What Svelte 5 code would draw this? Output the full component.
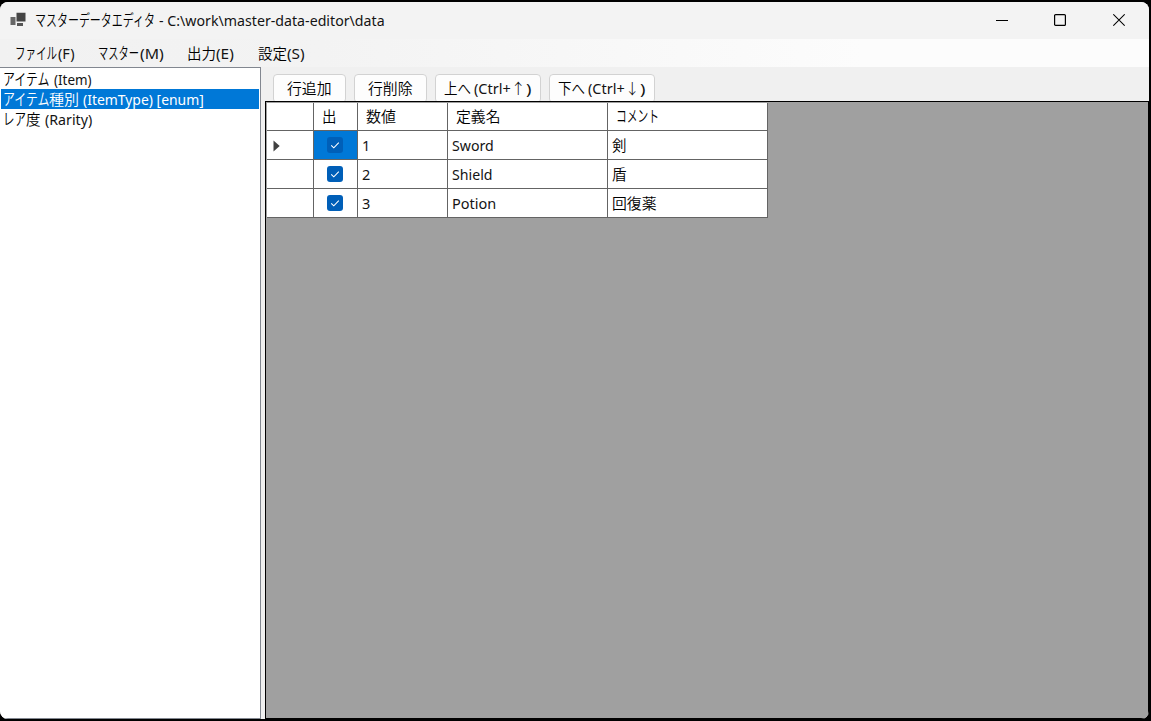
<script lang="ts">
  type Run = [text: string, width: number, gap?: number];

  const title: Run[] = [['マスターデータエディタ', 120], ['- C:\\work\\master-data-editor\\data', 226, 4]];
  const menus: { left: number; runs: Run[] }[] = [
    { left: 15, runs: [['ファイル', 42], ['(F)', 17, 1]] },
    { left: 23, runs: [['マスター', 41], ['(M)', 24, 1]] },
    { left: 23, runs: [['出力', 29], ['(E)', 18]] },
    { left: 24, runs: [['設定', 29], ['(S)', 18]] }
  ];
  const masters: Run[][] = [
    [['アイテム', 46], ['(Item)', 38, 5]],
    [['アイテム', 46], ['種別', 30], ['(ItemType) [enum]', 121, 4]],
    [['レア', 23], ['度', 15], ['(Rarity)', 47, 4]]
  ];
  const buttons: { width: number; runs: Run[] }[] = [
    { width: 73, runs: [['行追加', 45]] },
    { width: 73, runs: [['行削除', 45]] },
    { width: 106, runs: [['上へ', 27], ['(Ctrl+', 37, 3], ['↑', 15], [')', 5]] },
    { width: 106, runs: [['下へ', 27], ['(Ctrl+', 37, 3], ['↓', 15], [')', 5]] }
  ];
  const headers: Run[][] = [[], [['出', 15]], [['数値', 30]], [['定義名', 45]], [['コメント', 43]]];
  const rows: Run[][] = [
    [['1', 8], ['Sword', 42], ['剣', 15]],
    [['2', 8], ['Shield', 41], ['盾', 15]],
    [['3', 8], ['Potion', 44], ['回復薬', 45]]
  ];

  let master = $state(1);
  let current = $state(0);
  let checked = $state([true, true, true]);

  const isLatin = (text: string) => /^[\x20-\x7e]+$/.test(text);
  const isKana = (text: string) => /^[\u30a0-\u30ff]+$/.test(text);
  const isArrow = (text: string) => /^[↑↓]$/.test(text);

  function fit(node: HTMLElement, width: number) {
    node.style.transform = `scaleX(${width / node.offsetWidth})`;
  }
</script>

{#snippet label(runs: Run[])}
  <span class="label">
    {#each runs as [text, width, gap = 0]}
      <span class="run" style:width="{width}px" style:margin-left="{gap}px"><span class="glyphs" class:latin={isLatin(text)} class:kana={isKana(text)} class:arrow={isArrow(text)} use:fit={width}>{text}</span></span>
    {/each}
  </span>
{/snippet}

<div class="desktop">
  <div class="window">
    <header class="titlebar">
      <svg class="app-icon" width="17" height="16" viewBox="0 0 17 16">
        <path fill="#666" d="M0.5 5H5.5V13H0.5z" />
        <path fill="#444" d="M6.5 .7H15.5V9.5H6.5z" />
        <path fill="#555" d="M7 11H13V14H7z" />
      </svg>
      {@render label(title)}
      <div class="controls">
        <svg class="minimize" width="12" height="14" viewBox="0 0 12 14"><path d="M0 7.5H12" /></svg>
        <svg width="12" height="14" viewBox="0 0 12 14"><rect x=".6" y="1.6" width="10.8" height="10.8" rx="1" /></svg>
        <svg width="12" height="14" viewBox="0 0 12 14"><path d="M.3 1.3L11.7 12.7M11.7 1.3L.3 12.7" /></svg>
      </div>
    </header>

    <nav class="menubar">
      {#each menus as menu}
        <div class="menu" style:margin-left="{menu.left}px">{@render label(menu.runs)}</div>
      {/each}
    </nav>

    <div class="body">
      <div class="masters" role="listbox" tabindex="0">
        {#each masters as item, i}
          <div class="master" class:selected={master === i} role="option" aria-selected={master === i} tabindex="-1" onclick={() => (master = i)} onkeydown={() => {}}>
            {@render label(item)}
          </div>
        {/each}
      </div>

      <main class="editor">
        <div class="toolbar">
          {#each buttons as button}
            <button style:width="{button.width}px">{@render label(button.runs)}</button>
          {/each}
        </div>
        <div class="sheet">
          <div class="grid">
            {#each headers as h}
              <div class="cell head">{@render label(h)}</div>
            {/each}
            {#each rows as row, i}
              <div class="cell marker">
                {#if current === i}
                  <svg width="7" height="12" viewBox="0 0 7 12"><path fill="#404040" d="M.5 0.5L6.7 6L.5 11.5z" /></svg>
                {/if}
              </div>
              <div class="cell check" class:active={current === i}>
                <button class="box" aria-label="出" onclick={() => (checked[i] = !checked[i])}>
                  {#if checked[i]}
                    <svg width="16" height="16" viewBox="0 0 16 16"><path fill="none" stroke="#fff" stroke-width="1.1" d="M4.2 8.3L6.8 10.8L11.8 5.6" /></svg>
                  {/if}
                </button>
              </div>
              {#each row as cell}
                <div class="cell">{@render label([cell])}</div>
              {/each}
            {/each}
          </div>
        </div>
      </main>
    </div>
  </div>
</div>

<style>
  :global(body) {
    margin: 0;
    background: #000;
  }
  .desktop {
    box-sizing: border-box;
    width: 1151px;
    height: 721px;
    padding: 2px 2px 2px 0;
    background: #000;
    font: 350 14.5px/20px 'Noto Sans', 'Noto Sans CJK JP', sans-serif;
    color: #000;
  }
  .window {
    display: flex;
    flex-direction: column;
    height: 717px;
    overflow: hidden;
    border-radius: 8px;
    background: #f0f0f0;
  }
  .label {
    display: inline-flex;
    height: 20px;
    white-space: pre;
  }
  .run {
    display: block;
    flex: none;
    height: 20px;
  }
  .glyphs {
    display: block;
    width: max-content;
    height: 20px;
    line-height: 20px;
    transform-origin: 0 50%;
  }
  .latin {
    font-weight: 400;
    color: #141414;
  }
  .selected .latin {
    color: #fff;
  }
  .kana {
    font-size: 16px;
  }
  .arrow {
    font-family: 'Noto Sans CJK JP', sans-serif;
    font-weight: 300;
  }
  .titlebar {
    display: flex;
    flex: none;
    align-items: center;
    box-sizing: border-box;
    height: 37px;
    padding: 0 0 2px 10px;
    background: #f3f3f3;
  }
  .app-icon {
    margin: 0 8px 0 0;
  }
  .controls {
    display: flex;
    gap: 47px;
    margin: 0 24px 0 auto;
  }
  .controls svg {
    fill: none;
    stroke: #000;
    stroke-width: 1.2;
  }
  .controls .minimize {
    margin-right: -1px;
  }
  .menubar {
    display: flex;
    flex: none;
    align-items: center;
    height: 28px;
    background: linear-gradient(90deg, #f1f1f1, #f3f3f3 28%, #fcfcfc 75%);
  }
  .menu {
    height: 20px;
  }
  .body {
    display: flex;
    flex: 1;
    min-height: 0;
  }
  .masters {
    box-sizing: border-box;
    width: 261px;
    padding: 1px 1px 0;
    border: solid #828790;
    border-width: 1px 1px 1px 0;
    background: #fff;
    outline: none;
  }
  .master {
    height: 20px;
    padding-left: 2px;
  }
  .selected {
    background: #0078d7;
    color: #fff;
  }
  .editor {
    display: flex;
    flex: 1;
    flex-direction: column;
    margin-left: 4px;
  }
  .toolbar {
    display: flex;
    flex: none;
    gap: 8px;
    height: 27px;
    padding: 7px 0 0 8px;
    overflow: hidden;
  }
  .toolbar button {
    box-sizing: border-box;
    height: 29px;
    padding: 0 1px 2px 0;
    border: 1px solid #d2d2d2;
    border-radius: 4px;
    background: #fdfdfd;
    color: inherit;
    font: inherit;
  }
  .sheet {
    flex: 1;
    padding: 1px;
    border: 1px solid #000;
    background: #a0a0a0;
  }
  .grid {
    display: grid;
    grid-template-columns: 47px 44px 90px 160px 160px;
    grid-template-rows: 28px 29px 29px 29px;
    width: 501px;
  }
  .cell {
    display: flex;
    box-sizing: border-box;
    align-items: center;
    padding-left: 4px;
    border: solid #646464;
    border-width: 0 1px 1px 0;
    background: #fff;
  }
  .head {
    padding: 0 0 2px 8px;
  }
  .marker {
    padding: 1px 0 0 6px;
  }
  .check {
    justify-content: center;
    padding: 0 1px 0 0;
  }
  .active {
    background: #0078d7;
  }
  .box {
    width: 16px;
    height: 16px;
    padding: 0;
    border: 0;
    border-radius: 3px;
    background: #005fb8;
  }
  .box svg {
    display: block;
  }
</style>
